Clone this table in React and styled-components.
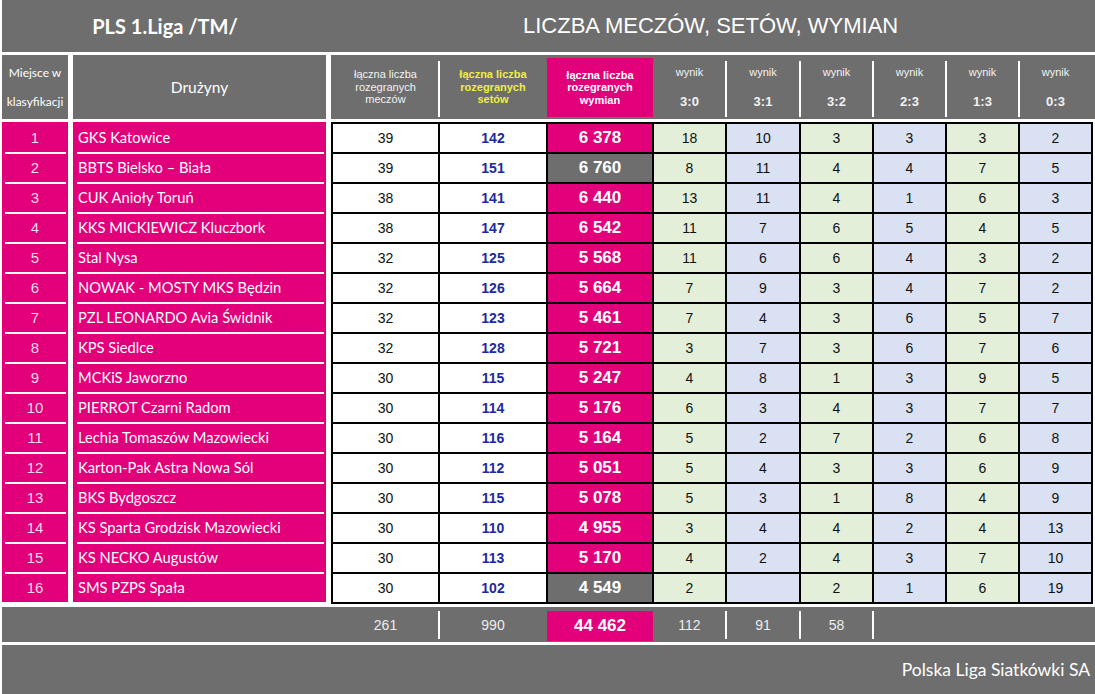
import React from 'react';
import styled, { createGlobalStyle } from 'styled-components';

const PINK = '#e2007a';
const GRAY = '#6e6e6e';
const GREEN = '#e3efd9';
const BLUE = '#d9e1f3';
const COLS = '105px 106px 104px 71px 72px 71px 71px 71px 71px';

const GlobalStyle = createGlobalStyle`
  html, body {
    margin: 0;
    padding: 0;
    background: #fff;
  }
  body {
    font-family: 'Liberation Sans', Arial, sans-serif;
  }
`;

const Page = styled.div`
  width: 1095px;
  height: 694px;
  padding-left: 2px;
  box-sizing: border-box;
  display: flex;
  flex-direction: column;
  overflow: hidden;
`;

const TitleBar = styled.div`
  height: 52px;
  background: ${GRAY};
  display: flex;
  align-items: center;
  color: #fff;
  flex-shrink: 0;
`;

const LeagueName = styled.div`
  width: 326px;
  text-align: center;
  font-family: Lato, 'Open Sans', sans-serif;
  font-weight: 700;
  font-size: 20px;
`;

const ReportTitle = styled.div`
  margin-left: 195px;
  font-family: 'Liberation Sans', Arial, sans-serif;
  font-size: 22px;
`;

const HeaderRow = styled.div`
  margin-top: 3px;
  height: 64px;
  display: grid;
  grid-template-columns: 66px 253px 1fr;
  column-gap: 5px;
  flex-shrink: 0;
`;

const HeadCell = styled.div`
  background: ${GRAY};
  color: #fff;
  display: flex;
  align-items: center;
  justify-content: center;
  text-align: center;
  font-family: Lato, 'Open Sans', sans-serif;
  font-size: ${(p) => p.$size || 12}px;
  line-height: ${(p) => p.$lh || 29}px;
`;

const HeadGroup = styled.div`
  background: ${GRAY};
  display: grid;
  grid-template-columns: ${COLS};
  column-gap: 2px;
  padding: 0 2px;
`;

const StatHead = styled.div`
  position: relative;
  display: flex;
  flex-direction: column;
  align-items: center;
  justify-content: center;
  text-align: center;
  font-size: 11px;
  line-height: 12.5px;
  font-weight: ${(p) => (p.$bold ? 700 : 400)};
  color: ${(p) => p.$color || '#f2f2f2'};
  background: ${(p) => p.$bg || 'transparent'};
  margin: ${(p) => (p.$bg ? '3px -1px 2px' : '0')};

  &::before {
    content: '';
    display: ${(p) => (p.$divider ? 'block' : 'none')};
    position: absolute;
    left: -2px;
    top: 6px;
    bottom: 2px;
    width: 2px;
    background: #fff;
  }
`;

const ScoreLabel = styled.span`
  font-size: 11px;
  line-height: 29px;
`;

const ScoreValue = styled.span`
  font-size: 13px;
  font-weight: 700;
  line-height: 29px;
`;

const Body = styled.div`
  margin-top: 3px;
  display: flex;
  align-items: flex-start;
  flex-shrink: 0;
`;

const TeamTable = styled.div`
  display: grid;
  grid-template-columns: 66px 253px;
  grid-auto-rows: 30px;
  column-gap: 5px;
  margin-right: 5px;
`;

const TeamCell = styled.div`
  position: relative;
  background: ${PINK};
  display: flex;
  align-items: center;
  justify-content: ${(p) => (p.$rank ? 'center' : 'flex-start')};
  padding-left: ${(p) => (p.$rank ? 0 : 5)}px;
  color: ${(p) => (p.$rank ? '#f6dbe9' : '#fff')};
  font-family: ${(p) => (p.$rank ? "'Liberation Sans', Arial, sans-serif" : "Lato, 'Open Sans', sans-serif")};
  font-size: ${(p) => (p.$rank ? 15 : 14.7)}px;
  white-space: nowrap;

  &::before {
    content: '';
    display: ${(p) => (p.$first ? 'none' : 'block')};
    position: absolute;
    top: 0;
    left: ${(p) => (p.$rank ? 3 : 4)}px;
    right: 2px;
    height: 2px;
    background: #fff;
  }
`;

const DataGrid = styled.div`
  display: grid;
  grid-template-columns: ${COLS};
  grid-auto-rows: 28px;
  gap: 2px;
  padding: 2px;
  background: #000;
`;

const DataCell = styled.div`
  background: ${(p) => p.$bg || '#fff'};
  color: ${(p) => p.$color || '#111'};
  font-weight: ${(p) => (p.$bold ? 700 : 400)};
  font-size: ${(p) => p.$size || 14}px;
  display: flex;
  align-items: center;
  justify-content: center;
`;

const TotalRow = styled.div`
  margin-top: 3px;
  height: 35px;
  background: ${GRAY};
  display: grid;
  grid-template-columns: 329px ${COLS};
  column-gap: 2px;
  flex-shrink: 0;
`;

const TotalCell = styled.div`
  position: relative;
  display: flex;
  align-items: center;
  justify-content: center;
  color: ${(p) => (p.$bg ? '#fff' : '#ececec')};
  background: ${(p) => p.$bg || 'transparent'};
  font-size: ${(p) => (p.$bg ? 17 : 14)}px;
  font-weight: ${(p) => (p.$bg ? 700 : 400)};
  margin: ${(p) => (p.$bg ? '4px -1px 1px' : '0')};

  &::before {
    content: '';
    display: ${(p) => (p.$divider ? 'block' : 'none')};
    position: absolute;
    left: -2px;
    top: 4px;
    bottom: 3px;
    width: 2px;
    background: #fff;
  }
`;

const Footer = styled.div`
  margin-top: 3px;
  flex: 1;
  background: ${GRAY};
  display: flex;
  align-items: center;
  justify-content: flex-end;
  padding-right: 5px;
  color: #fff;
  font-family: Lato, 'Open Sans', sans-serif;
  font-size: 17.5px;
`;

const teams = [
  [1, 'GKS Katowice', 39, 142, '6 378', PINK, 18, 10, 3, 3, 3, 2],
  [2, 'BBTS Bielsko – Biała', 39, 151, '6 760', GRAY, 8, 11, 4, 4, 7, 5],
  [3, 'CUK Anioły Toruń', 38, 141, '6 440', PINK, 13, 11, 4, 1, 6, 3],
  [4, 'KKS MICKIEWICZ Kluczbork', 38, 147, '6 542', PINK, 11, 7, 6, 5, 4, 5],
  [5, 'Stal Nysa', 32, 125, '5 568', PINK, 11, 6, 6, 4, 3, 2],
  [6, 'NOWAK - MOSTY MKS Będzin', 32, 126, '5 664', PINK, 7, 9, 3, 4, 7, 2],
  [7, 'PZL LEONARDO Avia Świdnik', 32, 123, '5 461', PINK, 7, 4, 3, 6, 5, 7],
  [8, 'KPS Siedlce', 32, 128, '5 721', PINK, 3, 7, 3, 6, 7, 6],
  [9, 'MCKiS Jaworzno', 30, 115, '5 247', PINK, 4, 8, 1, 3, 9, 5],
  [10, 'PIERROT Czarni Radom', 30, 114, '5 176', PINK, 6, 3, 4, 3, 7, 7],
  [11, 'Lechia Tomaszów Mazowiecki', 30, 116, '5 164', PINK, 5, 2, 7, 2, 6, 8],
  [12, 'Karton-Pak Astra Nowa Sól', 30, 112, '5 051', PINK, 5, 4, 3, 3, 6, 9],
  [13, 'BKS Bydgoszcz', 30, 115, '5 078', PINK, 5, 3, 1, 8, 4, 9],
  [14, 'KS Sparta Grodzisk Mazowiecki', 30, 110, '4 955', PINK, 3, 4, 4, 2, 4, 13],
  [15, 'KS NECKO Augustów', 30, 113, '5 170', PINK, 4, 2, 4, 3, 7, 10],
  [16, 'SMS PZPS Spała', 30, 102, '4 549', GRAY, 2, '', 2, 1, 6, 19],
];

const scores = ['3:0', '3:1', '3:2', '2:3', '1:3', '0:3'];

export default function App() {
  return (
    <>
      <GlobalStyle />
      <Page>
        <TitleBar>
          <LeagueName>PLS 1.Liga /TM/</LeagueName>
          <ReportTitle>LICZBA MECZÓW, SETÓW, WYMIAN</ReportTitle>
        </TitleBar>

        <HeaderRow>
          <HeadCell>
            Miejsce w<br />klasyfikacji
          </HeadCell>
          <HeadCell $size={15.5} $lh={20}>Drużyny</HeadCell>
          <HeadGroup>
            <StatHead>
              <span>łączna liczba</span>
              <span>rozegranych</span>
              <span>meczów</span>
            </StatHead>
            <StatHead $divider $bold $color="#f0ef3e">
              <span>łączna liczba</span>
              <span>rozegranych</span>
              <span>setów</span>
            </StatHead>
            <StatHead $bold $bg={PINK} $color="#fff">
              <span>łączna liczba</span>
              <span>rozegranych</span>
              <span>wymian</span>
            </StatHead>
            {scores.map((s, i) => (
              <StatHead key={s} $divider={i > 0}>
                <ScoreLabel>wynik</ScoreLabel>
                <ScoreValue>{s}</ScoreValue>
              </StatHead>
            ))}
          </HeadGroup>
        </HeaderRow>

        <Body>
          <TeamTable>
            {teams.map((t, i) => (
              <React.Fragment key={t[0]}>
                <TeamCell $rank $first={i === 0}>{t[0]}</TeamCell>
                <TeamCell $first={i === 0}>{t[1]}</TeamCell>
              </React.Fragment>
            ))}
          </TeamTable>

          <DataGrid>
            {teams.map((t) => (
              <React.Fragment key={t[0]}>
                <DataCell>{t[2]}</DataCell>
                <DataCell $bold $color="#1d2a9e">{t[3]}</DataCell>
                <DataCell $bold $bg={t[5]} $color="#fff" $size={17}>{t[4]}</DataCell>
                {t.slice(6).map((v, j) => (
                  <DataCell key={j} $bg={j % 2 === 0 ? GREEN : BLUE}>{v}</DataCell>
                ))}
              </React.Fragment>
            ))}
          </DataGrid>
        </Body>

        <TotalRow>
          <TotalCell />
          <TotalCell>261</TotalCell>
          <TotalCell $divider>990</TotalCell>
          <TotalCell $bg={PINK}>44 462</TotalCell>
          <TotalCell>112</TotalCell>
          <TotalCell $divider>91</TotalCell>
          <TotalCell $divider>58</TotalCell>
          <TotalCell $divider />
          <TotalCell />
          <TotalCell />
        </TotalRow>

        <Footer>Polska Liga Siatkówki SA</Footer>
      </Page>
    </>
  );
}
